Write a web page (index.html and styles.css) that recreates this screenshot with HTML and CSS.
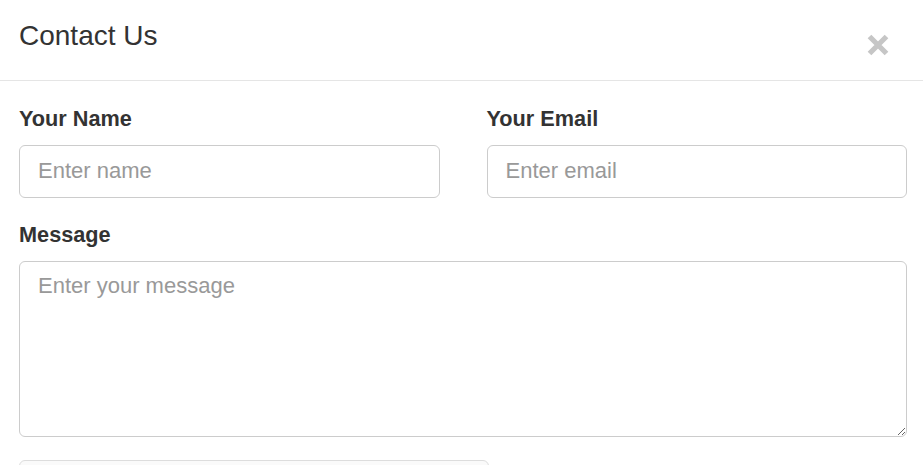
FILE: index.html
```html
<!DOCTYPE html>
<html lang="en">
<head>
<meta charset="utf-8">
<title>Contact Us</title>
<link rel="stylesheet" href="styles.css">
</head>
<body>
<div class="modal">
  <div class="modal-header">
    <h4 class="modal-title">Contact Us</h4>
    <button class="close" type="button" aria-label="Close">
      <svg width="24" height="24" viewBox="0 0 24 24"><path d="M3.5 3.5 L20.5 20.5 M20.5 3.5 L3.5 20.5" stroke="#c6c6c6" stroke-width="5.2" stroke-linecap="butt" fill="none"/></svg>
    </button>
  </div>
  <div class="modal-body">
    <div class="row">
      <div class="form-group">
        <label class="label">Your Name</label>
        <input class="form-control" type="text" placeholder="Enter name">
      </div>
      <div class="form-group">
        <label class="label">Your Email</label>
        <input class="form-control" type="email" placeholder="Enter email">
      </div>
    </div>
    <div class="form-group form-group-lg">
      <label class="label">Message</label>
      <textarea class="form-control textarea" placeholder="Enter your message"></textarea>
    </div>
    <div class="form-group">
      <div class="form-control half"></div>
    </div>
  </div>
</div>
</body>
</html>
```

FILE: styles.css
```css
* { box-sizing: border-box; }
html, body { margin: 0; padding: 0; background: #fff; overflow: hidden; }
body { font-family: "Liberation Sans", Arial, sans-serif; color: #333; }
.modal { width: 923px; }
.modal-header {
  height: 81px;
  padding: 17px 33px 0 19px;
  border-bottom: 1px solid #e5e5e5;
  display: flex;
  justify-content: space-between;
  align-items: flex-start;
}
.modal-title {
  margin: 0;
  font-size: 28px;
  font-weight: normal;
  line-height: 38px;
  color: #333;
}
.close {
  margin-top: 16px;
  padding: 0;
  border: 0;
  background: none;
  width: 24px;
  height: 24px;
  display: block;
}
.close svg { display: block; }
.modal-body { padding: 23px 16px 0 19px; }
.row {
  display: grid;
  grid-template-columns: 1fr 1fr;
  column-gap: 47px;
}
.form-group { margin-bottom: 22px; }
.form-group-lg { margin-bottom: 23.5px; }
.label {
  display: block;
  font-size: 21.7px;
  font-weight: bold;
  line-height: 30px;
  margin-bottom: 11px;
  color: #333;
}
.form-control {
  display: block;
  width: 100%;
  height: 52.5px;
  padding: 9px 18px;
  font-family: "Liberation Sans", Arial, sans-serif;
  font-size: 22px;
  line-height: 30px;
  color: #555;
  background: #fff;
  border: 1px solid #ccc;
  border-radius: 6px;
  outline: none;
}
.form-control::placeholder { color: #999; }
.textarea { height: 176px; resize: vertical; }
.half { width: 470px; background: #fafafa; border-color: #ddd; }
```
